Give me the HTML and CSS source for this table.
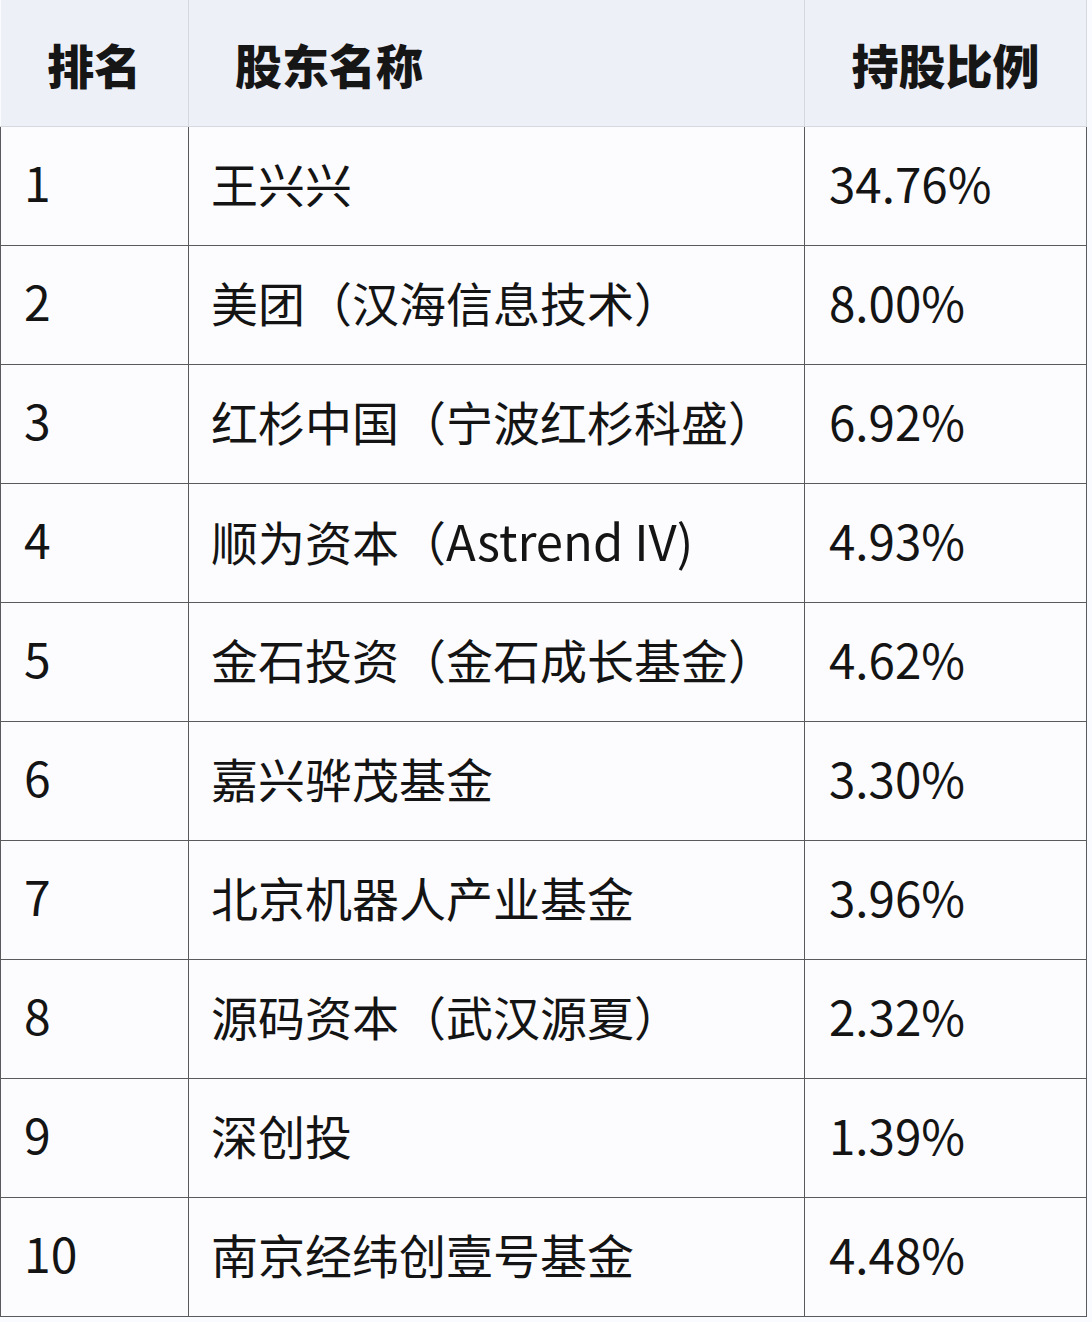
FILE: index.html
```html
<!DOCTYPE html>
<html lang="zh-CN">
<head>
<meta charset="utf-8">
<title>股东持股比例</title>
<link rel="stylesheet" href="styles.css">
</head>
<body>
<table class="holders">
  <colgroup>
    <col class="c-rank">
    <col class="c-name">
    <col class="c-pct">
  </colgroup>
  <thead>
    <tr>
      <th class="h-rank">排名</th>
      <th class="h-name">股东名称</th>
      <th class="h-pct">持股比例</th>
    </tr>
  </thead>
  <tbody>
    <tr><td class="rank">1</td><td class="name">王兴兴</td><td class="pct">34.76%</td></tr>
    <tr><td class="rank">2</td><td class="name">美团（汉海信息技术）</td><td class="pct">8.00%</td></tr>
    <tr><td class="rank">3</td><td class="name">红杉中国（宁波红杉科盛）</td><td class="pct">6.92%</td></tr>
    <tr><td class="rank">4</td><td class="name">顺为资本（<span class="lat">Astrend IV)</span></td><td class="pct">4.93%</td></tr>
    <tr><td class="rank">5</td><td class="name">金石投资（金石成长基金）</td><td class="pct">4.62%</td></tr>
    <tr><td class="rank">6</td><td class="name">嘉兴骅茂基金</td><td class="pct">3.30%</td></tr>
    <tr><td class="rank">7</td><td class="name">北京机器人产业基金</td><td class="pct">3.96%</td></tr>
    <tr><td class="rank">8</td><td class="name">源码资本（武汉源夏）</td><td class="pct">2.32%</td></tr>
    <tr><td class="rank">9</td><td class="name">深创投</td><td class="pct">1.39%</td></tr>
    <tr><td class="rank">10</td><td class="name">南京经纬创壹号基金</td><td class="pct">4.48%</td></tr>
  </tbody>
</table>
</body>
</html>
```
FILE: styles.css
```css
html, body {
  margin: 0;
  padding: 0;
  background: #fafbfe;
}

body {
  font-family: "Noto Sans CJK SC", sans-serif;
  color: #141414;
}

.holders {
  border-collapse: collapse;
  table-layout: fixed;
  width: 1086px;
}

.c-rank { width: 188px; }
.c-name { width: 616px; }
.c-pct { width: 282px; }

.holders thead th {
  height: 126px;
  padding: 0;
  background: #eef0f8;
  border: 1px solid #d6d8e0;
  border-top: none;
  font-weight: 900;
  font-size: 47px;
  color: #161616;
  vertical-align: middle;
}

.holders thead th.h-rank { border-left: none; text-align: center; }
.holders thead th.h-name { text-align: left; padding-left: 46px; }
.holders thead th.h-pct { text-align: center; }

.holders tbody td {
  height: 119px;
  padding: 0 0 6px 0;
  border: 1px solid #5a5a5e;
  vertical-align: middle;
  background: #fcfcff;
  line-height: 1.2;
  box-sizing: border-box;
}

.holders tbody td.rank {
  padding-left: 23px;
  font-size: 48px;
  padding-bottom: 8px;
}
.holders tbody td.name {
  padding-left: 22px;
  font-size: 47px;
}
.holders tbody td.name .lat {
  font-size: 49px;
}
.holders tbody td.pct {
  padding-left: 24px;
  font-size: 47.5px;
  padding-bottom: 8px;
}
```
